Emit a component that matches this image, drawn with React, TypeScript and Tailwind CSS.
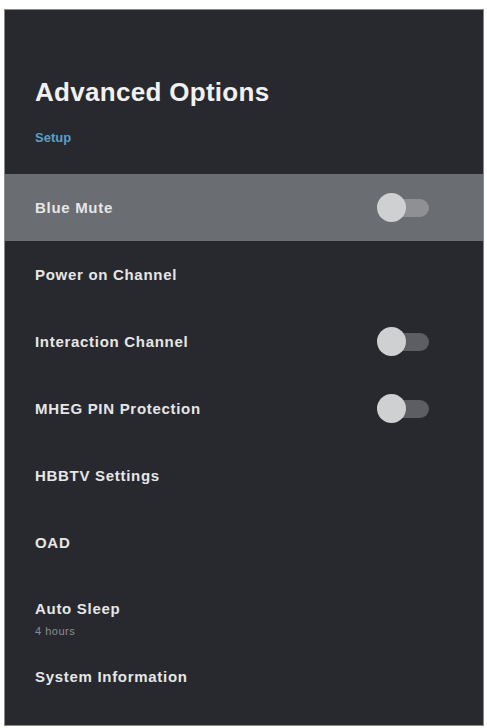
import React from 'react'

type Row = {
  label: string
  toggle?: boolean
  sub?: string
  active?: boolean
}

const ROWS: Row[] = [
  { label: 'Blue Mute', toggle: true, active: true },
  { label: 'Power on Channel' },
  { label: 'Interaction Channel', toggle: true },
  { label: 'MHEG PIN Protection', toggle: true },
  { label: 'HBBTV Settings' },
  { label: 'OAD' },
  { label: 'Auto Sleep', sub: '4 hours' },
  { label: 'System Information' },
]

function Toggle({ active }: { active?: boolean }) {
  return (
    <div className="relative w-[52px] h-[28px] flex items-center">
      <div
        className={`absolute right-0 w-[40px] h-[18px] rounded-full ${
          active ? 'bg-[#8e9094]' : 'bg-[#5c5e63]'
        }`}
      />
      <div className="relative w-[29px] h-[29px] rounded-full bg-[#cfd0d2]" />
    </div>
  )
}

export default function App() {
  return (
    <div className="w-[487px] h-[728px] bg-white pt-[9px] pl-[4px]">
      <div
        className="w-[480px] h-[717px] bg-[#27292f] border border-[#8a8a8a] overflow-hidden flex flex-col"
        style={{ fontFamily: '"Liberation Sans", Arial, sans-serif' }}
      >
        {/* Header */}
        <div className="h-[164px] pl-[30px] pt-[67px] shrink-0">
          <h1 className="text-[26px] leading-[30px] font-bold tracking-[0.3px] text-[#f1f1f1]">
            Advanced Options
          </h1>
          <p className="mt-[23px] text-[13px] leading-[16px] font-bold text-[#5b9fc6]">Setup</p>
        </div>

        {/* Rows */}
        <div className="flex flex-col">
          {ROWS.map((row) => (
            <div
              key={row.label}
              className={`h-[67px] pl-[30px] pr-[54px] flex justify-between ${
                row.sub ? 'items-start pt-[24px]' : 'items-center'
              } ${row.active ? 'bg-[#6a6d72]' : ''}`}
            >
              <div className="flex flex-col">
                <span className="text-[15px] leading-[18px] font-bold tracking-[0.7px] text-[#e6e6e6]">
                  {row.label}
                </span>
                {row.sub && (
                  <span className="mt-[7px] text-[11px] leading-[13px] tracking-[0.5px] text-[#8b8d91]">
                    {row.sub}
                  </span>
                )}
              </div>
              {row.toggle && <Toggle active={row.active} />}
            </div>
          ))}
        </div>
      </div>
    </div>
  )
}
